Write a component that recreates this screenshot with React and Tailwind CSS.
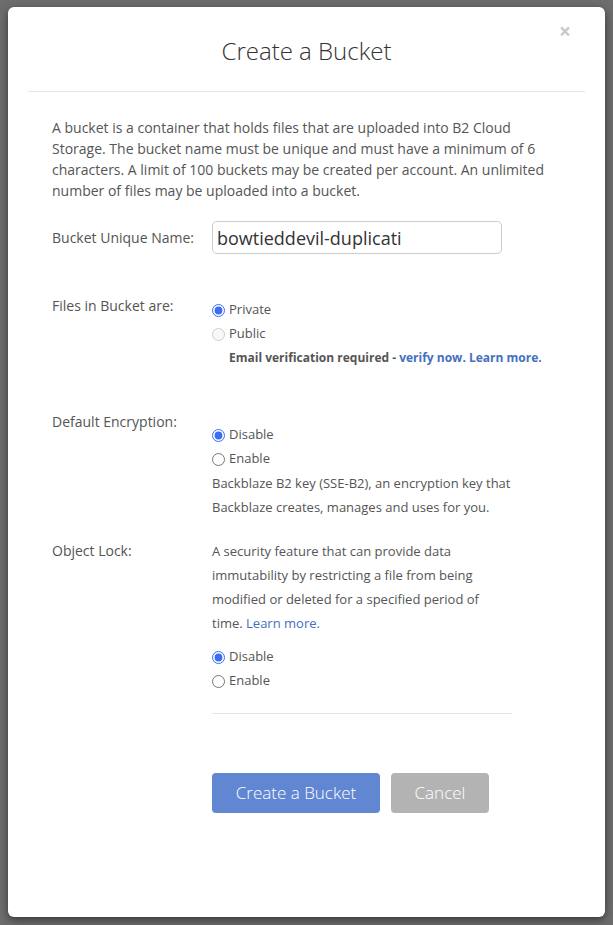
import React from "react"

const font = { fontFamily: '"Open Sans", "Liberation Sans", sans-serif' }

function Radio({ checked, disabled, label }) {
  return (
    <label className="flex h-6 items-center gap-[4px] text-[13px] text-[#555]">
      <input
        type="radio"
        defaultChecked={checked}
        disabled={disabled}
        className="m-0 h-[13px] w-[13px] accent-[#3b6cf4]"
      />
      <span>{label}</span>
    </label>
  )
}

export default function App() {
  return (
    <div className="min-h-screen bg-[#6d6d6d] pl-[8px] pt-[7px]" style={font}>
      <div className="relative flex h-[910px] w-[597px] flex-col rounded-[6px] bg-white shadow-[0_3px_9px_rgba(0,0,0,0.5)]">
        <button className="absolute right-[34px] top-[14px] text-[21px] font-bold leading-none text-[#c9c9c9]">
          ×
        </button>

        <div className="pt-[27px] text-center text-[24px] font-light leading-[33px] text-[#333]">
          Create a Bucket
        </div>
        <div className="mx-[20px] mt-[24px] h-px bg-[#e5e5e5]" />

        <div className="px-[44px]">
          <p className="mt-[25px] text-[14px] leading-[21px] text-[#555]">
            A bucket is a container that holds files that are uploaded into B2 Cloud
            Storage. The bucket name must be unique and must have a minimum of 6
            characters. A limit of 100 buckets may be created per account. An unlimited
            number of files may be uploaded into a bucket.
          </p>

          <div className="mt-[20px] flex items-center">
            <div className="w-[160px] text-[14px] text-[#555]">Bucket Unique Name:</div>
            <input
              defaultValue="bowtieddevil-duplicati"
              className="h-[33px] w-[290px] rounded-[5px] border border-[#ccc] px-[4px] text-[18px] text-[#333] outline-none"
            />
          </div>

          <div className="mt-[42px] flex">
            <div className="w-[160px] text-[14px] leading-5 text-[#555]">Files in Bucket are:</div>
            <div className="mt-[2px] flex flex-col">
              <Radio checked label="Private" />
              <Radio disabled label="Public" />
              <div className="pl-[17px] text-[12px] font-bold leading-[23px] text-[#555]">
                Email verification required -{" "}
                <a className="text-[#4470be]">verify now.</a>{" "}
                <a className="text-[#4470be]">Learn more.</a>
              </div>
            </div>
          </div>

          <div className="mt-[43px] flex">
            <div className="w-[160px] text-[14px] leading-5 text-[#555]">Default Encryption:</div>
            <div className="mt-[11px] flex flex-col">
              <Radio checked label="Disable" />
              <Radio label="Enable" />
              <div className="text-[13px] leading-6 text-[#555]">
                Backblaze B2 key (SSE-B2), an encryption key that
                <br />
                Backblaze creates, manages and uses for you.
              </div>
            </div>
          </div>

          <div className="mt-[20px] flex">
            <div className="mt-[2px] w-[160px] text-[14px] leading-5 text-[#555]">Object Lock:</div>
            <div className="flex w-[300px] flex-col">
              <div className="text-[13px] leading-6 text-[#555]">
                A security feature that can provide data immutability by restricting a
                file from being modified or deleted for a specified period of time.{" "}
                <a className="text-[#4470be]">Learn more.</a>
              </div>
              <div className="mt-[10px]">
                <Radio checked label="Disable" />
                <Radio label="Enable" />
              </div>
              <div className="mt-[20px] h-px bg-[#e5e5e5]" />
              <div className="mt-[59px] flex gap-[11px]">
                <button className="h-[40px] w-[168px] rounded-[4px] bg-[#6287d2] text-[17px] font-light text-white">
                  Create a Bucket
                </button>
                <button className="h-[40px] w-[98px] rounded-[4px] bg-[#b3b3b3] text-[17px] font-light text-white">
                  Cancel
                </button>
              </div>
            </div>
          </div>
        </div>
      </div>
    </div>
  )
}
